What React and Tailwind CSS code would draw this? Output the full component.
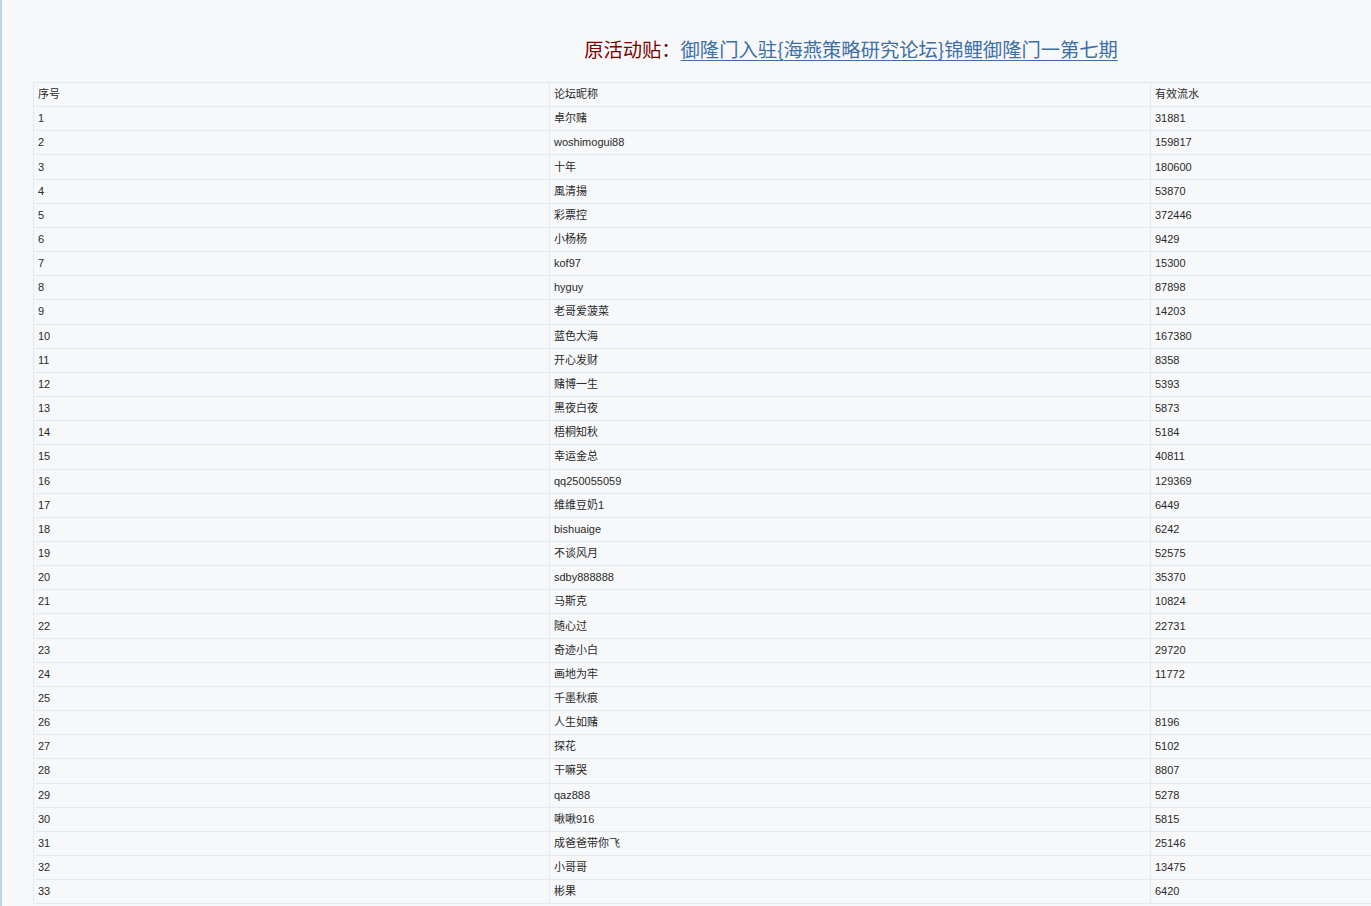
import React from "react";

const rows = [
  ["1", "卓尔赌", "31881"],
  ["2", "woshimogui88", "159817"],
  ["3", "十年", "180600"],
  ["4", "風清揚", "53870"],
  ["5", "彩票控", "372446"],
  ["6", "小杨杨", "9429"],
  ["7", "kof97", "15300"],
  ["8", "hyguy", "87898"],
  ["9", "老哥爱菠菜", "14203"],
  ["10", "蓝色大海", "167380"],
  ["11", "开心发财", "8358"],
  ["12", "赌博一生", "5393"],
  ["13", "黑夜白夜", "5873"],
  ["14", "梧桐知秋", "5184"],
  ["15", "幸运金总", "40811"],
  ["16", "qq250055059", "129369"],
  ["17", "维维豆奶1", "6449"],
  ["18", "bishuaige", "6242"],
  ["19", "不谈风月", "52575"],
  ["20", "sdby888888", "35370"],
  ["21", "马斯克", "10824"],
  ["22", "随心过", "22731"],
  ["23", "奇迹小白", "29720"],
  ["24", "画地为牢", "11772"],
  ["25", "千墨秋痕", ""],
  ["26", "人生如赌", "8196"],
  ["27", "探花", "5102"],
  ["28", "干嘛哭", "8807"],
  ["29", "qaz888", "5278"],
  ["30", "啾啾916", "5815"],
  ["31", "成爸爸带你飞", "25146"],
  ["32", "小哥哥", "13475"],
  ["33", "彬果", "6420"],
];

const cell =
  "border border-[#e1ebf5] pl-[4px] pr-[4px] pt-0 pb-[1px] h-[24.16px] text-left font-normal align-middle";

export default function App() {
  return (
    <div className="w-screen h-[906px] overflow-hidden bg-[#f7f8f9]">
      <div className="w-[1700px] min-h-[906px] border-l-2 border-[#bad4e9] bg-[#f7f8f9] text-[#2a2a2a]">
        <div
          className="pt-[35px] mb-[19px] text-center text-[19.3px] leading-[28px]"
          style={{ fontFamily: '"Noto Sans CJK SC", "Noto Sans", sans-serif' }}
        >
          <span className="text-[#7a0000]">原活动贴：</span>
          <a href="#" className="text-[#3b6fa8] underline underline-offset-[3px]">
            御隆门入驻{"{"}海燕策略研究论坛{"}"}锦鲤御隆门一第七期
          </a>
        </div>
        <table
          className="ml-[31px] w-[1634px] table-fixed border-collapse text-[11px] leading-[16px]"
          style={{ fontFamily: '"Liberation Sans", "Noto Sans CJK SC", sans-serif' }}
        >
          <colgroup>
            <col className="w-[516px]" />
            <col className="w-[601px]" />
            <col className="w-[517px]" />
          </colgroup>
          <thead>
            <tr>
              <th className={cell}>序号</th>
              <th className={cell}>论坛昵称</th>
              <th className={cell}>有效流水</th>
            </tr>
          </thead>
          <tbody>
            {rows.map((r) => (
              <tr key={r[0]}>
                <td className={cell}>{r[0]}</td>
                <td className={cell}>{r[1]}</td>
                <td className={cell}>{r[2]}</td>
              </tr>
            ))}
          </tbody>
        </table>
      </div>
    </div>
  );
}
